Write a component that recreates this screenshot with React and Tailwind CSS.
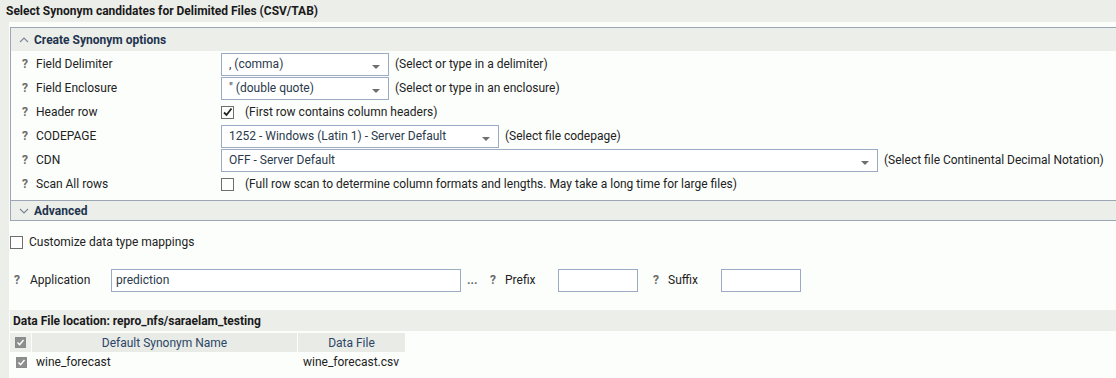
import React from "react";

const font = { fontFamily: "Roboto, 'Liberation Sans', sans-serif" };

function Help() {
  return <span className="w-[14px] font-bold text-[#6b6b6b] text-[12px]">?</span>;
}

function Select({ value, width }) {
  return (
    <div
      className={`flex items-center justify-between h-[23px] border border-[#9aabc3] bg-white pl-[7px] pr-[8px] text-[12px] text-[#2a3a4c] ${width}`}
    >
      <span>{value}</span>
      <svg width="8" height="6" viewBox="0 0 8 6" className="mt-[6px]">
        <path d="M0 1 L8 1 L4 5 Z" fill="#6f6f6f" />
      </svg>
    </div>
  );
}

function Check({ checked, small }) {
  return (
    <span
      className={`flex items-center justify-center border ${
        small ? "w-[11px] h-[11px] border-[#8a8a8a] bg-[#8e8e8e]" : "w-[13px] h-[13px] border-[#6e6e6e] bg-white"
      }`}
    >
      {checked && !small && (
        <svg width="11" height="11" viewBox="0 0 11 11">
          <path d="M2 5.5 L4.5 8 L9.5 1.5" stroke="#222" strokeWidth="1.8" fill="none" />
        </svg>
      )}
      {small && (
        <svg width="9" height="9" viewBox="0 0 9 9">
          <path d="M1.5 4.5 L3.6 6.6 L7.5 2" stroke="#fff" strokeWidth="1.4" fill="none" />
        </svg>
      )}
    </span>
  );
}

function Row({ label, children }) {
  return (
    <div className="flex items-center h-[24px]">
      <div className="flex items-center w-[210px] pl-[11px] text-[12px] text-[#222]">
        <Help />
        <span>{label}</span>
      </div>
      {children}
    </div>
  );
}

function Chevron({ up }) {
  return (
    <svg width="10" height="6" viewBox="0 0 10 6" className="mr-[5px]">
      <path d={up ? "M1 5 L5 1 L9 5" : "M1 1 L5 5 L9 1"} stroke="#7a8595" strokeWidth="1.1" fill="none" />
    </svg>
  );
}

export default function App() {
  return (
    <div className="w-[1116px] h-[378px] bg-[#eceeea] overflow-hidden" style={font}>
      <div className="h-[22px] flex items-center pl-[6px] text-[12px] font-bold text-[#1a1a1a]">
        Select Synonym candidates for Delimited Files (CSV/TAB)
      </div>
      <div className="ml-[9px] bg-[#fcfefc] h-[356px] pt-[5px]">
        <div className="ml-[1px] border-l border-t border-[#9aa6b4]">
          <div className="h-[23px] flex items-center pl-[8px] bg-[#eceeea] text-[12px] font-bold text-[#1e344e]">
            <Chevron up />
            Create Synonym options
          </div>
          <div className="bg-[#fcfefc] pt-[1px] pb-[4px]">
            <Row label="Field Delimiter">
              <Select value=", (comma)" width="w-[168px]" />
              <span className="ml-[6px] text-[12px] text-[#222]">(Select or type in a delimiter)</span>
            </Row>
            <Row label="Field Enclosure">
              <Select value={'" (double quote)'} width="w-[168px]" />
              <span className="ml-[6px] text-[12px] text-[#222]">(Select or type in an enclosure)</span>
            </Row>
            <Row label="Header row">
              <Check checked />
              <span className="ml-[11px] text-[12px] text-[#222]">(First row contains column headers)</span>
            </Row>
            <Row label="CODEPAGE">
              <Select value="1252 - Windows (Latin 1) - Server Default" width="w-[278px]" />
              <span className="ml-[6px] text-[12px] text-[#222]">(Select file codepage)</span>
            </Row>
            <Row label="CDN">
              <Select value="OFF - Server Default" width="w-[657px]" />
              <span className="ml-[6px] text-[12px] text-[#222]">(Select file Continental Decimal Notation)</span>
            </Row>
            <Row label="Scan All rows">
              <Check />
              <span className="ml-[11px] text-[12px] text-[#222]">
                (Full row scan to determine column formats and lengths. May take a long time for large files)
              </span>
            </Row>
          </div>
          <div className="h-[21px] flex items-center pl-[8px] bg-[#eceeea] border-t border-b border-[#9aa6b4] text-[12px] font-bold text-[#1e344e]">
            <Chevron />
            Advanced
          </div>
        </div>

        <div className="flex items-center mt-[14px] h-[14px] pl-[1px] text-[12px] text-[#222]">
          <Check />
          <span className="ml-[6px]">Customize data type mappings</span>
        </div>

        <div className="flex items-center mt-[19px] h-[24px] text-[12px] text-[#222]">
          <span className="ml-[5px] w-[16px]"><Help /></span>
          <span className="w-[81px]">Application</span>
          <div className="w-[350px] h-[23px] border border-[#9aabc3] bg-white flex items-center pl-[4px] text-[#2a3a4c]">
            prediction
          </div>
          <span className="ml-[6px] w-[23px] font-bold text-[#6b6b6b]">...</span>
          <span className="w-[15px]"><Help /></span>
          <span className="w-[53px]">Prefix</span>
          <div className="w-[80px] h-[23px] border border-[#9aabc3] bg-white" />
          <span className="ml-[15px] w-[15px]"><Help /></span>
          <span className="w-[53px]">Suffix</span>
          <div className="w-[80px] h-[23px] border border-[#9aabc3] bg-white" />
        </div>

        <div className="mt-[18px] ml-[1px] h-[21px] bg-[#eceeea] flex items-center pl-[3px] text-[12px] font-bold text-[#1a1a1a]">
          Data File location: repro_nfs/saraelam_testing
        </div>
        <div className="ml-[1px] mt-[2px] flex h-[19px] bg-[#eceeea] text-[12px] text-[#2b4666]">
          <div className="w-[22px] flex items-center justify-center border-r border-[#fcfefc]">
            <Check small />
          </div>
          <div className="w-[266px] flex items-center justify-center border-r border-[#fcfefc] bg-[#e9ebe7]">
            Default Synonym Name
          </div>
          <div className="w-[108px] flex items-center justify-center border-r border-[#fcfefc] bg-[#e9ebe7]">
            Data File
          </div>
          <div className="flex-1 bg-[#fcfefc]" />
        </div>
        <div className="ml-[1px] flex h-[20px] items-center text-[12px] text-[#222]">
          <div className="w-[22px] flex items-center justify-center">
            <Check small />
          </div>
          <div className="w-[267px] pl-[4px]">wine_forecast</div>
          <div className="pl-[4px]">wine_forecast.csv</div>
        </div>
      </div>
    </div>
  );
}
